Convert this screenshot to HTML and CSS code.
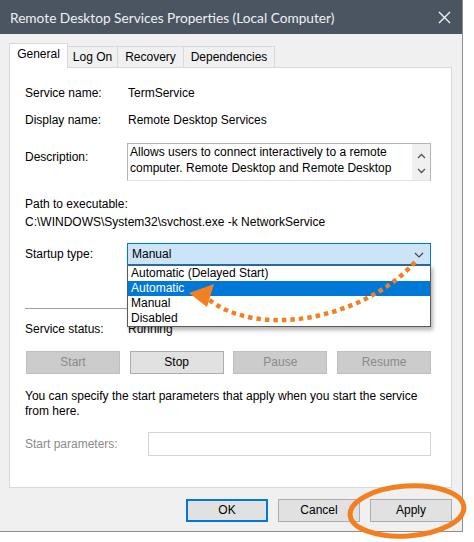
FILE: index.html
```html
<!DOCTYPE html>
<html>
<head>
<meta charset="utf-8">
<link rel="stylesheet" href="styles.css">
</head>
<body>
<div class="screen">
  <div class="window">
    <div class="titlebar">
      <span class="title">Remote Desktop Services Properties (Local Computer)</span>
      <svg class="close" width="13" height="13" viewBox="0 0 13 13"><path d="M1 1L12 12M12 1L1 12" stroke="#f2f3f5" stroke-width="1.4" fill="none"/></svg>
    </div>
    <div class="client">
      <div class="tabs">
        <div class="tab active t-general">General</div>
        <div class="tab t-logon">Log On</div>
        <div class="tab t-recovery">Recovery</div>
        <div class="tab t-deps">Dependencies</div>
      </div>
      <div class="panel">
        <div class="row"><span class="lbl">Service name:</span><span class="val">TermService</span></div>
        <div class="row r-display"><span class="lbl">Display name:</span><span class="val">Remote Desktop Services</span></div>
        <div class="row r-desc">
          <span class="lbl lbl-desc">Description:</span>
          <div class="desc">
            <div class="desc-text">Allows users to connect interactively to a remote computer. Remote Desktop and Remote Desktop</div>
            <div class="desc-scroll">
              <svg width="9" height="6" viewBox="0 0 9 6"><path d="M1 5L4.5 1.5L8 5" stroke="#555" stroke-width="1.3" fill="none"/></svg>
              <svg width="9" height="6" viewBox="0 0 9 6"><path d="M1 1L4.5 4.5L8 1" stroke="#555" stroke-width="1.3" fill="none"/></svg>
            </div>
          </div>
        </div>
        <div class="path-lbl">Path to executable:</div>
        <div class="path-val">C:\WINDOWS\System32\svchost.exe -k NetworkService</div>
        <div class="row r-startup">
          <span class="lbl">Startup type:</span>
          <div class="select">
            <span>Manual</span>
            <svg class="chev" width="10" height="6" viewBox="0 0 10 6"><path d="M1 1L5 5L9 1" stroke="#444" stroke-width="1.2" fill="none"/></svg>
            <ul class="dropdown">
              <li>Automatic (Delayed Start)</li>
              <li class="sel">Automatic</li>
              <li>Manual</li>
              <li>Disabled</li>
            </ul>
          </div>
        </div>
        <div class="sep"></div>
        <div class="row r-status"><span class="lbl">Service status:</span><span class="val">Running</span></div>
        <div class="svc-btns">
          <div class="btn disabled">Start</div>
          <div class="btn">Stop</div>
          <div class="btn disabled">Pause</div>
          <div class="btn disabled">Resume</div>
        </div>
        <p class="note">You can specify the start parameters that apply when you start the service from here.</p>
        <div class="row r-params">
          <span class="lbl lbl-params">Start parameters:</span>
          <div class="input"></div>
        </div>
      </div>
      <div class="footer">
        <div class="btn fbtn default">OK</div>
        <div class="btn fbtn">Cancel</div>
        <div class="btn fbtn">Apply</div>
      </div>
    </div>
  </div>
  <svg class="annot" width="474" height="542" viewBox="0 0 474 542">
    <path d="M415 262 C365 318 260 340 208 299" fill="none" stroke="#f28021" stroke-width="4.5" stroke-dasharray="4.5 4"/>
    <polygon points="189,293 214,284 207,307" fill="#f28021"/>
    <ellipse cx="407" cy="511" rx="57" ry="25" fill="none" stroke="#f28021" stroke-width="5" transform="rotate(-4 407 511)"/>
  </svg>
</div>
</body>
</html>
```
FILE: styles.css
```css
* { box-sizing: border-box; }
body {
  margin: 0;
  background: #fff;
  font-family: "Liberation Sans", Arial, sans-serif;
  font-size: 12px;
  color: #000;
}
.screen {
  position: relative;
  width: 474px;
  height: 542px;
  overflow: hidden;
}
.window {
  width: 463px;
  height: 532px;
  background: #f0f0f0;
  border-right: 1px solid #8e8e8e;
  border-bottom: 1px solid #8e8e8e;
  display: flex;
  flex-direction: column;
}
.titlebar {
  height: 34px;
  flex: none;
  background: #4b5562;
  display: flex;
  align-items: center;
  justify-content: space-between;
  padding: 0 11px 0 10px;
  color: #eef0f2;
  font-family: Lato, "Noto Sans", sans-serif;
  font-size: 13.7px;
}
.client {
  padding: 9px 10px 0 9px;
}
.tabs {
  display: flex;
  align-items: flex-end;
  height: 24px;
}
.tab {
  height: 21px;
  padding-top: 3px;
  line-height: 15px;
  text-align: center;
  border: 1px solid #d9d9d9;
  border-left: none;
  border-bottom: none;
  background: #f0f0f0;
}
.tab.active {
  height: 25px;
  border-left: 1px solid #d9d9d9;
  background: #fff;
  margin-bottom: -1px;
  position: relative;
  z-index: 1;
}
.t-general { width: 59px; }
.t-logon { width: 50px; }
.t-recovery { width: 66px; }
.t-deps { width: 91px; }
.panel {
  height: 421px;
  background: #fff;
  border: 1px solid #d9d9d9;
  padding: 18px 20px 0 15px;
}
.row {
  display: flex;
  align-items: flex-start;
  line-height: 15px;
}
.lbl {
  width: 103px;
  flex: none;
}
.r-display { margin-top: 12px; }
.r-desc { margin-top: 15px; }
.lbl-desc { padding-top: 7px; }
.desc {
  width: 304px;
  height: 38px;
  margin-left: -1px;
  border: 1px solid #b4b4b4;
  border-bottom-color: #e2e2e2;
  display: flex;
}
.desc-text {
  flex: 1;
  padding: 0 0 0 2px;
  line-height: 16px;
  overflow: hidden;
}
.desc-scroll {
  width: 18px;
  background: #f0f0f0;
  display: flex;
  flex-direction: column;
  justify-content: space-around;
  align-items: center;
  padding: 4px 0 2px;
}
.path-lbl { margin-top: 16px; line-height: 15px; }
.path-val { margin-top: 3px; line-height: 15px; }
.r-startup { margin-top: 13px; align-items: center; }
.select {
  position: relative;
  width: 304px;
  height: 22px;
  margin-left: -1px;
  border: 1px solid #0078d7;
  background: #cce4f7;
  padding-left: 4px;
  line-height: 20px;
}
.chev {
  position: absolute;
  right: 6px;
  top: 8px;
}
.dropdown {
  position: absolute;
  left: -1px;
  top: 21px;
  width: 304px;
  margin: 0;
  padding: 0;
  list-style: none;
  background: #fff;
  border: 1px solid #5b5b5b;
  box-shadow: 2px 3px 4px rgba(0, 0, 0, 0.3);
  z-index: 2;
}
.dropdown li {
  line-height: 15px;
  padding-left: 3px;
}
.dropdown li.sel {
  background: #0078d7;
  color: #fff;
}
.sep {
  margin-top: 43px;
  height: 1px;
  width: 406px;
  background: #a0a0a0;
}
.r-status { margin-top: 13px; }
.svc-btns {
  margin: 14px 0 0 1px;
  width: 405px;
  display: flex;
  justify-content: space-between;
}
.btn {
  height: 23px;
  border: 1px solid #adadad;
  background: #e1e1e1;
  text-align: center;
  line-height: 21px;
}
.svc-btns .btn { width: 94px; }
.btn.disabled {
  background: #cccccc;
  border-color: #bfbfbf;
  color: #8a8a8a;
}
.note {
  margin: 15px 0 0;
  line-height: 15px;
  width: 410px;
}
.r-params { margin-top: 13px; align-items: center; }
.lbl-params { width: 123px; color: #8a8a8a; }
.input {
  width: 283px;
  height: 24px;
  border: 1px solid #d4d4d4;
  background: #fff;
}
.footer {
  display: flex;
  justify-content: flex-end;
  gap: 10px;
  margin-top: 11px;
}
.fbtn { width: 82px; }
.fbtn.default {
  border-color: #0078d7;
  box-shadow: inset 0 0 0 1px #0078d7;
}
.annot {
  position: absolute;
  left: 0;
  top: 0;
  pointer-events: none;
  z-index: 5;
}
```
